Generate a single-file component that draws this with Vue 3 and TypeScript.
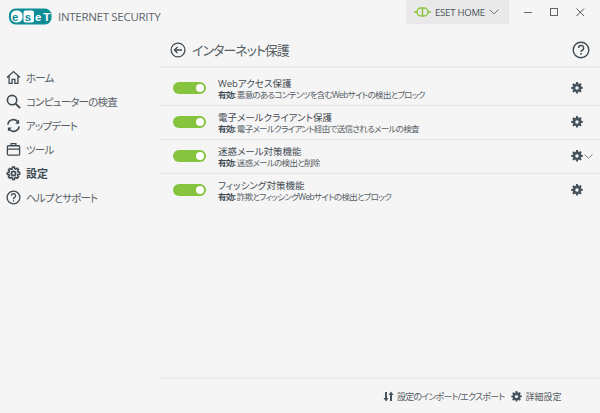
<script setup lang="ts">
const nav = [
  { id: 'home', label: 'ホーム' },
  { id: 'search', label: 'コンピューターの検査' },
  { id: 'update', label: 'アップデート' },
  { id: 'tools', label: 'ツール' },
  { id: 'gear', label: '設定', active: true },
  { id: 'help', label: 'ヘルプとサポート' },
]
const rows = [
  { title: 'Webアクセス保護', desc: '悪意のあるコンテンツを含むWebサイトの検出とブロック' },
  { title: '電子メールクライアント保護', desc: '電子メールクライアント経由で送信されるメールの検査' },
  { title: '迷惑メール対策機能', desc: '迷惑メールの検出と削除', more: true },
  { title: 'フィッシング対策機能', desc: '詐欺とフィッシングWebサイトの検出とブロック' },
]
const gear = 'M6.800 0h2.400l.4 2.100 1.200.5 1.800-1.200 1.700 1.700-1.200 1.800.5 1.200 2.100.4v2.400l-2.100.4-.5 1.200 1.200 1.800-1.700 1.700-1.800-1.200-1.200.5-.4 2.100H6.800l-.4-2.100-1.200-.5-1.800 1.200-1.700-1.700 1.200-1.800-.5-1.200L.3 9.200V6.800l2.100-.4.5-1.200-1.200-1.800 1.700-1.700 1.800 1.200 1.200-.5z'
</script>

<template>
  <div class="window">
    <header class="topbar">
      <div class="brand">
        <svg class="logo" width="45" height="19" viewBox="0 0 45 19">
          <rect x="1" y="1.500" width="42.500" height="16" rx="6.500" fill="#0f8d96" />
          <rect x="3" y="3.500" width="11.500" height="12" rx="5" fill="#fff" />
          <rect x="15.500" y="3.500" width="10.500" height="12" rx="2" fill="#fff" />
          <text x="4" y="13.600" class="lg dark">e</text>
          <text x="16.800" y="13.600" class="lg dark">s</text>
          <text x="27" y="13.600" class="lg">e</text>
          <text x="35.200" y="13.600" class="lg">T</text>
        </svg>
        <span class="product">INTERNET SECURITY</span>
      </div>
      <div class="controls">
        <div class="home-btn">
          <svg width="17" height="12" viewBox="0 0 17 12" fill="none" stroke="#8cc63f" stroke-width="1.500">
            <rect x="3" y="2" width="11" height="8" rx="4" />
            <path d="M0 6H3M14 6H17M8.500 2V10" />
          </svg>
          <span>ESET HOME</span>
          <svg width="10" height="6" viewBox="0 0 10 6" fill="none" stroke="#777" stroke-width="1"><path d="M.5.500 5 5 9.500.500" /></svg>
        </div>
        <div class="winbtns">
          <svg width="9" height="9" viewBox="0 0 9 9" stroke="#666"><path d="M0 4.500H8" /></svg>
          <svg width="9" height="9" viewBox="0 0 9 9" fill="none" stroke="#666"><rect x=".5" y=".5" width="7" height="7" /></svg>
          <svg width="9" height="9" viewBox="0 0 9 9" stroke="#555"><path d="M.5.500l7.500 7.500M8 .500 .5 8" /></svg>
        </div>
      </div>
    </header>

    <div class="body">
      <nav class="sidebar">
        <div v-for="item in nav" :key="item.id" class="nav-item" :class="{ active: item.active }">
          <svg class="nav-icon" width="15" height="15" viewBox="0 0 16 16" fill="none" stroke="#3f4a52" stroke-width="1.400">
            <template v-if="item.id === 'home'">
              <path d="M1 8 8 1.700 15 8M3.300 6.500V14.300H6.500V10H9.500V14.300H12.700V6.500" />
            </template>
            <template v-else-if="item.id === 'search'">
              <circle cx="6.500" cy="6.500" r="5" stroke-width="1.700" /><path d="M10.200 10.200 15 15" stroke-width="2" />
            </template>
            <template v-else-if="item.id === 'update'">
              <path d="M2 7A6 6 0 0 1 13 4.500M14 9A6 6 0 0 1 3 11.500" stroke-width="1.700" />
              <path d="M14 1.500V6H9.800ZM2 14.500V10H6.200Z" fill="#3f4a52" stroke="none" />
            </template>
            <template v-else-if="item.id === 'tools'">
              <rect x="1.500" y="4" width="13" height="10" rx="1" /><path d="M5.500 4V1.800H10.500V4M1.500 7.500H14.500" />
            </template>
            <template v-else-if="item.id === 'gear'">
              <path :d="gear" stroke-width="2" transform="translate(1.200 1.200) scale(.85)" /><circle cx="8" cy="8" r="2.200" stroke-width="1.800" />
            </template>
            <template v-else>
              <circle cx="8" cy="8" r="6.800" />
              <path d="M5.800 6.200A2.200 2.200 0 1 1 8.800 8.200C8 8.600 8 9 8 9.800" />
              <path d="M8 11V12.500" />
            </template>
          </svg>
          <span>{{ item.label }}</span>
        </div>
      </nav>

      <main class="main">
        <div class="title-bar">
          <svg width="16" height="16" viewBox="0 0 18 18" fill="none" stroke="#3f4a52" stroke-width="1.400">
            <circle cx="9" cy="9" r="7.800" />
            <path d="M13.500 9H5M8.500 5.500 5 9 8.500 12.500" stroke-width="1.500" />
          </svg>
          <h1>インターネット保護</h1>
          <svg class="help" width="18" height="18" viewBox="0 0 18 18" fill="none" stroke="#3f4a52" stroke-width="1.400">
            <circle cx="9" cy="9" r="7.800" />
            <path d="M6.600 7A2.500 2.500 0 1 1 10 9.300C9.200 9.800 9 10.200 9 11" />
            <path d="M9 12V13.700" />
          </svg>
        </div>

        <div class="rows">
          <div v-for="row in rows" :key="row.title" class="row">
            <div class="toggle"><i></i></div>
            <div class="texts">
              <div class="row-title">{{ row.title }}</div>
              <div class="row-desc"><b>有効:</b> {{ row.desc }}</div>
            </div>
            <svg class="cog" width="12" height="12" viewBox="0 0 16 16">
              <path :d="gear" fill="#46525c" />
              <circle cx="8" cy="8" r="2.300" fill="#f5f5f5" />
            </svg>
            <svg v-if="row.more" class="chev" width="9" height="5" viewBox="0 0 9 5" fill="none" stroke="#888"><path d="M.5.500 4.500 4.300 8.500.500" /></svg>
          </div>
        </div>

        <footer class="footer">
          <svg width="11" height="11" viewBox="0 0 11 11" fill="#46525c">
            <path d="M2 1H4V7H5.500L3 10.500 .5 7H2ZM7 10H9V4H10.500L8 .5 5.500 4H7Z" />
          </svg>
          <span class="f1">設定のインポート/エクスポート</span>
          <svg width="11" height="11" viewBox="0 0 16 16">
            <path :d="gear" fill="#46525c" />
            <circle cx="8" cy="8" r="2.300" fill="#f5f5f5" />
          </svg>
          <span class="f2">詳細設定</span>
        </footer>
      </main>
    </div>
  </div>
</template>

<style>
html, body { margin: 0; background: #f5f5f5; }
</style>

<style scoped>
.window {
  width: 600px;
  height: 413px;
  background: #f5f5f5;
  display: flex;
  flex-direction: column;
  overflow: hidden;
  font-family: "Open Sans", "Noto Sans CJK JP", sans-serif;
  font-feature-settings: "palt";
  color: #3f4a52;
}
.topbar { height: 31px; display: flex; justify-content: space-between; flex: none; }
.brand { display: flex; align-items: center; padding: 4px 0 0 8px; gap: 5px; height: 24px; }
.lg { font: bold 11.500px "Liberation Sans", sans-serif; fill: #fff; }
.dark { fill: #0f8d96; }
.product { font-size: 11.500px; color: #5d666d; letter-spacing: -0.3px; }
.controls { display: flex; }
.home-btn {
  width: 103px;
  height: 24px;
  background: #e9e9e9;
  display: flex;
  align-items: center;
  padding-left: 8px;
  box-sizing: border-box;
  gap: 4px;
  font-size: 9.500px;
  letter-spacing: -0.2px;
  color: #4b545b;
}
.winbtns { width: 91px; height: 24px; display: flex; align-items: center; justify-content: space-around; padding: 0 6px 0 6px; box-sizing: border-box; }
.body { flex: 1; display: flex; min-height: 0; }
.sidebar { width: 160px; flex: none; padding-top: 34px; }
.nav-item { height: 24px; display: flex; align-items: center; gap: 5px; padding-left: 6px; font-size: 10.500px; letter-spacing: -0.8px; color: #555e65; }
.nav-icon { flex: none; }
.nav-item.active { font-weight: 700; font-size: 11px; letter-spacing: 0; color: #3f4a52; }
.main { flex: 1; display: flex; flex-direction: column; min-width: 0; }
.title-bar {
  height: 33px;
  margin-top: 2px;
  border-bottom: 2px solid #ececec;
  display: flex;
  align-items: center;
  padding: 0 10px;
  gap: 6px;
}
h1 { margin: 0; font-size: 13px; letter-spacing: -1px; font-weight: 400; color: #555e65; flex: 1; }
.rows { flex: 1; padding-top: 4px; }
.row {
  height: 33px;
  border-bottom: 1px solid #e6e6e6;
  display: flex;
  align-items: center;
  padding-left: 13px;
  position: relative;
}
.row:last-child { border-bottom: none; }
.toggle { width: 33px; height: 12px; margin-top: -2px; border-radius: 6px; background: #86c440; position: relative; flex: none; }
.toggle i { position: absolute; right: 2px; top: 2px; width: 8px; height: 8px; border-radius: 50%; background: #fff; }
.texts { margin-left: 12px; flex: 1; line-height: 11px; padding-top: 1px; }
.row-title { font-size: 9.500px; color: #3f4a52; }
.row-desc { font-size: 8.500px; letter-spacing: -0.7px; color: #555e65; }
.row-desc b { color: #3f4a52; }
.cog { position: absolute; left: 411px; top: 10px; }
.chev { position: absolute; left: 424px; top: 14px; }
.footer {
  height: 34px;
  border-top: 2px solid #ececec;
  display: flex;
  align-items: center;
  padding-left: 223px;
  font-size: 9px;
  color: #555e65;
  flex: none;
}
.f1 { margin-left: 3px; margin-right: 7px; letter-spacing: -0.8px; }
.f2 { margin-left: 3px; }
</style>
